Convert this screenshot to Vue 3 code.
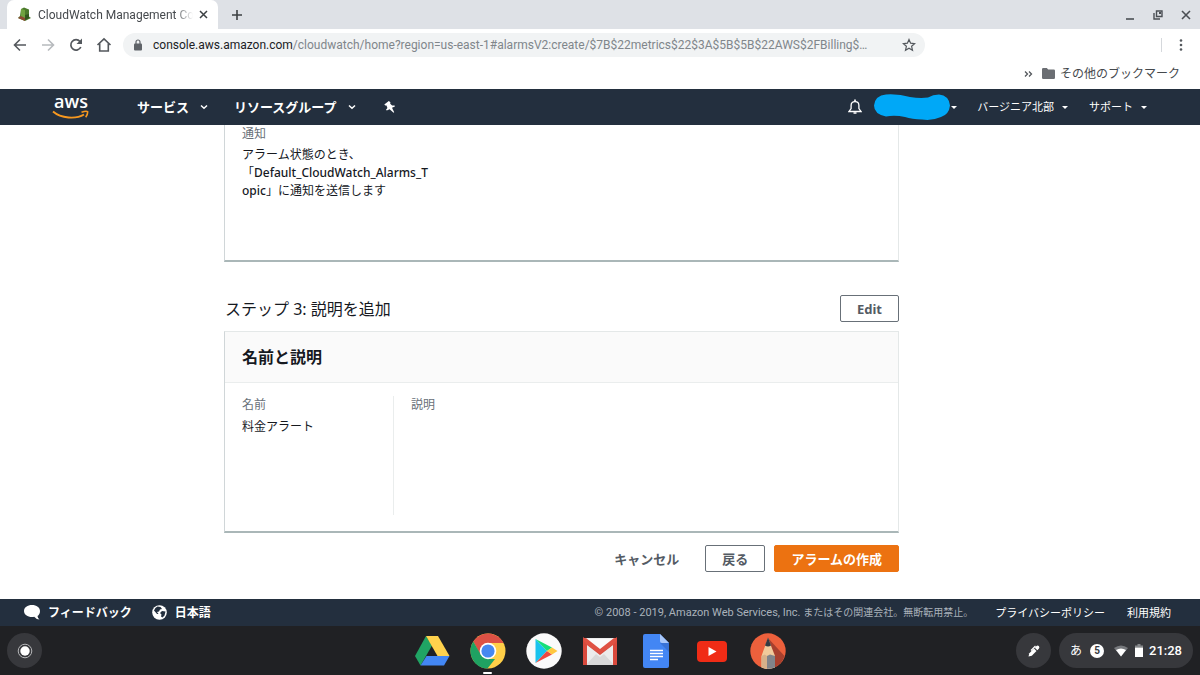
<script setup>
const path = '/cloudwatch/home?region=us-east-1#alarmsV2:create/$7B$22metrics$22$3A$5B$5B$22AWS$2FBilling$…'
</script>

<template>
  <div class="screen">
    <header class="tabs">
      <div class="tab">
        <svg class="favicon" width="15" height="15" viewBox="0 0 15 15" aria-hidden="true">
          <path d="M4 2l3-1.500 5 2v7l2 1.500-6 3-7-3 2-2z" fill="#4b7a2b" />
          <path d="M4 2l4 1v10l-4-2z" fill="#6fa23f" /><path d="M1 11l3-2 4 2v3z" fill="#8b4a32" />
          <path d="M8 8l4-1v4l-4 2z" fill="#31561e" />
        </svg>
        <span class="tab-title">CloudWatch Management Console</span>
        <button class="plain close" aria-label="Close tab">
          <svg width="9" height="9" viewBox="0 0 9 9"><path d="M1 1l7 7M8 1l-7 7" stroke="#3c4043" stroke-width="1.500" /></svg>
        </button>
      </div>
      <button class="plain add" aria-label="New tab">
        <svg width="12" height="12" viewBox="0 0 12 12"><path d="M6 1v10M1 6h10" stroke="#3c4043" stroke-width="1.600" /></svg>
      </button>
      <div class="window-controls">
        <button class="plain" aria-label="Minimize"><svg width="12" height="12" viewBox="0 0 12 12"><path d="M2 10h8" stroke="#4b4f54" stroke-width="1.600" /></svg></button>
        <button class="plain" aria-label="Restore"><svg width="12" height="12" viewBox="0 0 12 12"><path d="M4.500 2h5.500v5.500h-5.500zM2 4v6h6" fill="none" stroke="#4b4f54" stroke-width="1.400" /><path d="M7 3h2v2h-2z" fill="#4b4f54" /></svg></button>
        <button class="plain" aria-label="Close window"><svg width="12" height="12" viewBox="0 0 12 12"><path d="M2 2l8 8M10 2l-8 8" stroke="#4b4f54" stroke-width="1.600" /></svg></button>
      </div>
    </header>

    <div class="toolbar">
      <button class="plain" aria-label="Back"><svg width="16" height="16" viewBox="0 0 16 16"><path d="M14 8H2.500M8 2.500L2.500 8 8 13.500" fill="none" stroke="#54585d" stroke-width="1.600" /></svg></button>
      <button class="plain" aria-label="Forward"><svg width="16" height="16" viewBox="0 0 16 16"><path d="M2 8h11.500M8 2.500L13.500 8 8 13.500" fill="none" stroke="#b7babd" stroke-width="1.600" /></svg></button>
      <button class="plain" aria-label="Reload"><svg width="16" height="16" viewBox="0 0 16 16"><path d="M12.800 10A5.200 5.200 0 1 1 12 4.500L13.500 6" fill="none" stroke="#54585d" stroke-width="1.700" /><path d="M14 1.500v5.500H8.500z" fill="#54585d" /></svg></button>
      <button class="plain" aria-label="Home"><svg width="16" height="16" viewBox="0 0 16 16"><path d="M1.500 8L8 1.800 14.500 8M3.700 6.500V14h8.600V6.500" fill="none" stroke="#54585d" stroke-width="1.600" /></svg></button>
      <div class="address">
        <svg width="10" height="12" viewBox="0 0 10 12" aria-hidden="true"><rect x="1" y="4.500" width="8" height="7" rx="1" fill="#5f6368" /><path d="M3 5V3a2 2 0 0 1 4 0v2" fill="none" stroke="#5f6368" stroke-width="1.200" /></svg>
        <span class="url"><span class="host">console.aws.amazon.com</span>{{ path }}</span>
        <button class="plain" aria-label="Bookmark this page"><svg width="14" height="14" viewBox="0 0 14 14"><path d="M7 1.500l1.600 3.700 4 .4-3 2.700.9 4L7 10.200l-3.500 2.100.9-4-3-2.700 4-.4z" fill="none" stroke="#54585d" stroke-width="1.200" /></svg></button>
      </div>
      <span class="divider"></span>
      <button class="plain" aria-label="Browser menu"><svg width="4" height="14" viewBox="0 0 4 14" fill="#54585d"><circle cx="2" cy="2.500" r="1.300" /><circle cx="2" cy="7" r="1.300" /><circle cx="2" cy="11.500" r="1.300" /></svg></button>
    </div>

    <div class="bookmarks">
      <button class="plain more" aria-label="More bookmarks"><svg width="9" height="8" viewBox="0 0 9 8"><path d="M1 1.500l2.500 2.500L1 6.500M5 1.500l2.500 2.500L5 6.500" fill="none" stroke="#54585d" stroke-width="1.300" /></svg></button>
      <button class="plain folder">
        <svg width="13" height="11" viewBox="0 0 13 11" aria-hidden="true"><path d="M1.200 0h3.600L6.200 1.500h5.600q1.200 0 1.200 1.200v7q0 1.300-1.200 1.300H1.200Q0 11 0 9.700V1.300Q0 0 1.200 0z" fill="#6b6e73" /></svg>
        その他のブックマーク
      </button>
    </div>

    <nav class="nav">
      <a class="aws" href="#" aria-label="aws">
        <span>aws</span>
        <svg width="38" height="10" viewBox="0 0 38 10" aria-hidden="true"><path d="M1 1.500C9 8.500 24 9.500 32 4.500" fill="none" stroke="#f7981f" stroke-width="1.900" /><path d="M29.500 2.200q5-1.600 6.200-.4 0 3-2 5.400" fill="none" stroke="#f7981f" stroke-width="1.600" /></svg>
      </a>
      <button class="plain menu services">サービス<svg width="8" height="6" viewBox="0 0 8 6"><path d="M1 1.500l3 2.800 3-2.800" fill="none" stroke="#fff" stroke-width="1.500" /></svg></button>
      <button class="plain menu groups">リソースグループ<svg width="8" height="6" viewBox="0 0 8 6"><path d="M1 1.500l3 2.800 3-2.800" fill="none" stroke="#fff" stroke-width="1.500" /></svg></button>
      <button class="plain pin" aria-label="Pin"><svg width="12" height="14" viewBox="0 0 12 14"><path d="M4.800 1L.3 4.600l1 1 1.200 0 .9 2.400L2 9.800l.8.8 2.800-1.400 4 3.600.6-.5-2.200-4.500 2.900-1.300-.3-1-2.500.1-1.900-1.800.2-1.600z" fill="#fff" /></svg></button>
      <div class="account">
        <button class="plain" aria-label="Notifications"><svg width="14" height="16" viewBox="0 0 14 16"><path d="M1 12.500h12L10.900 9.500V6.500Q10.900 2.600 7 2.600T3.100 6.500v3z" fill="none" stroke="#fff" stroke-width="1.300" /><path d="M7 .5v2M5.500 14h3" stroke="#fff" stroke-width="1.700" /></svg></button>
        <button class="plain small user" aria-label="Account"><svg width="76" height="28" viewBox="0 0 76 28"><path d="M12 1.500Q25 .8 36 4q10 1.500 18 .5 5-3 11-3 10 1 11 11-1 9-9 11.500-9 4-19 2.500-10-.5-17-2.500-10-2-19-.5Q0 21 0 12.500 1 2.500 12 1.500z" fill="#00a8f7" /></svg><span class="caret"></span></button>
        <button class="plain small region">バージニア北部<span class="caret"></span></button>
        <button class="plain small support">サポート<span class="caret"></span></button>
      </div>
    </nav>

    <main class="content">
      <section class="card notice">
        <h3 class="label">通知</h3>
        <p class="message">アラーム状態のとき、<br />「<b>Default_CloudWatch_Alarms_T</b><br /><b>opic</b>」に通知を送信します</p>
      </section>
      <div class="step">
        <h1>ステップ 3: 説明を追加</h1>
        <button class="button">Edit</button>
      </div>
      <section class="card">
        <header class="card-head"><h2>名前と説明</h2></header>
        <dl class="fields">
          <div class="field"><dt class="label">名前</dt><dd>料金アラート</dd></div>
          <div class="field"><dt class="label">説明</dt><dd></dd></div>
        </dl>
      </section>
      <div class="actions">
        <button class="button link">キャンセル</button>
        <button class="button">戻る</button>
        <button class="button primary">アラームの作成</button>
      </div>
    </main>

    <footer class="footer">
      <a href="#" class="strong">
        <svg width="16" height="15" viewBox="0 0 16 15" aria-hidden="true"><path d="M8 0c4.500 0 8 2.500 8 6 0 2.500-1 4-2.500 5q.2 2 2 3.500-3.200 0-5.300-2.700Q9 12 8 12c-4.500 0-8-2.500-8-6s3.500-6 8-6z" fill="#fff" /></svg>
        フィードバック
      </a>
      <a href="#" class="strong lang">
        <svg width="15" height="15" viewBox="0 0 15 15" aria-hidden="true"><circle cx="7.500" cy="7.500" r="7.300" fill="#fff" /><path d="M5.500 1.500l3 .5 1.500 2-2 .5-1 2-2 .5L6.500 9 5 9 2 5.500Q3 2.500 5.500 1.500zM10 6l3.500.5-1 4-2 2-1.500-1 .5-2-1.500-1.500z" fill="#232f3e" /></svg>
        日本語
      </a>
      <small>© 2008 - 2019, Amazon Web Services, Inc. <span>またはその関連会社。無断転用禁止。</span></small>
      <a href="#">プライバシーポリシー</a>
      <a href="#" class="terms">利用規約</a>
    </footer>

    <div class="shelf">
      <button class="plain round" aria-label="Launcher"><svg width="16" height="16" viewBox="0 0 16 16"><circle cx="8" cy="8" r="6.800" fill="none" stroke="#b5b6b8" /><circle cx="8" cy="8" r="4.700" fill="#fff" /></svg></button>
      <div class="apps">
        <button class="plain" aria-label="Drive"><svg width="36" height="36" viewBox="0 0 36 36"><path d="M12 3L1 23l5.500 9.500L18 12.500z" fill="#20a464" /><path d="M12 3h12l11.500 20H23.500z" fill="#ffd24d" /><path d="M6.500 32.500L12.500 23h23L30 32.500z" fill="#4387f4" /></svg></button>
        <button class="plain active" aria-label="Chrome"><svg width="36" height="36" viewBox="0 0 36 36"><circle cx="18" cy="18" r="17.500" fill="#ffcf48" /><path d="M3.300 8.500A17.500 17.500 0 0 1 33.500 10H18L10.500 22z" fill="#dd5145" /><path d="M3.300 8.500L11 22 18 26h7l-7.500 9.500A17.500 17.500 0 0 1 3.300 8.500z" fill="#1fa262" /><circle cx="18" cy="18" r="8.300" fill="#fff" /><circle cx="18" cy="18" r="6.600" fill="#4688f1" /></svg></button>
        <button class="plain" aria-label="Play Store"><svg width="36" height="36" viewBox="0 0 36 36"><circle cx="18" cy="18" r="17.700" fill="#fafafa" /><path d="M9.500 6L21 18 9.500 30z" fill="#19c3ee" /><path d="M9.500 6L26 14.500 21 18z" fill="#15df78" /><path d="M9.500 30L21 18l5 3.500z" fill="#ef4840" /><path d="M26 14.500l5.500 3.500-5.500 3.500L21 18z" fill="#ffc73e" /></svg></button>
        <button class="plain" aria-label="Gmail"><svg width="36" height="36" viewBox="0 0 36 36"><rect x="1" y="5" width="34" height="27" rx="2" fill="#ececec" /><path d="M4 32l10-11 4 3 4-3 10 11z" fill="#d9d9d9" /><path d="M4 6h28L18 17z" fill="#fafafa" /><path d="M3 32V8l15 11.500L33 8v24" fill="none" stroke="#d94a3d" stroke-width="4" /><path d="M1 7q0-2 3-2l14 11L32 5q3 0 3 2l-3 4-14 10L4 11z" fill="#df5143" /></svg></button>
        <button class="plain" aria-label="Docs"><svg width="36" height="36" viewBox="0 0 36 36"><path d="M7 1h15l9 9v23q0 2-2 2H7q-2 0-2-2V3q0-2 2-2z" fill="#4386f4" /><path d="M22 1v7q0 2 2 2h7z" fill="#a8c7fa" /><path d="M22 10h9v9z" fill="#3973d6" /><path d="M12 17.500h13M12 20.500h13M12 23.500h13M12 26.500h8" stroke="#fff" stroke-width="1.400" /></svg></button>
        <button class="plain" aria-label="YouTube"><svg width="36" height="36" viewBox="0 0 36 36"><rect x="3" y="8" width="30" height="21" rx="4" fill="#f02c16" /><path d="M14.500 14l8 4.500-8 4.500z" fill="#fff" /></svg></button>
        <button class="plain" aria-label="Sketchpad"><svg width="36" height="36" viewBox="0 0 36 36"><circle cx="18" cy="18" r="17.700" fill="#ed603c" /><path d="M18 5L34.500 23A17.700 17.700 0 0 1 24 34.500z" fill="#a8402e" /><path d="M18 5l-6.500 18v11.500a17.700 17.700 0 0 0 13.500 0V23z" fill="#f1ca9b" /><path d="M11.500 23l3.300-1.500 2.200 1.500v12.800q-3-.2-5.500-1.500z" fill="#d7b18a" /><path d="M17 23l3-1.500 5 1.500v11.300q-4 1.700-8 1.500z" fill="#81848a" /><path d="M18 4.500l-3 8q3 2 6 0z" fill="#343a42" /></svg></button>
      </div>
      <div class="status">
        <button class="plain round" aria-label="Stylus tools"><svg width="14" height="14" viewBox="0 0 14 14"><path d="M1.500 12.500l.8-3.300L7 4.500 9.500 7 4.800 11.700z" fill="#fff" /><path d="M7.800 3.700l1.700-1.700q1.200-1 2.300.1t.2 2.300L10.300 6.200z" fill="#fff" /><path d="M4 6.500L8.500 2" fill="none" stroke="#fff" stroke-width="1.300" /></svg></button>
        <button class="plain tray">
          <span class="ime">あ</span><span class="count">5</span>
          <svg class="wifi" width="14" height="12" viewBox="0 0 14 12" aria-label="Wi-Fi"><path d="M0 3q7-5 14 0L7 11.500z" fill="#77797d" /><path d="M2 5q5-3 10 0L7 11.500z" fill="#fff" /></svg>
          <svg class="battery" width="8" height="13" viewBox="0 0 8 13" aria-label="Battery"><path d="M2.500 0h3v1.500H8v2H0v-2h2.500z" fill="#85878a" /><path d="M0 3.500h8V13H0z" fill="#fff" /></svg>
          <time>21:28</time>
        </button>
      </div>
    </div>
  </div>
</template>

<style>
body { background: #fff; }
</style>

<style scoped>
* { box-sizing: border-box; }
.screen { display: flex; flex-direction: column; height: 100vh; overflow: hidden; color: #16191f; font: 12px/18px "Noto Sans", "Noto Sans CJK JP", sans-serif; }
.plain { display: flex; align-items: center; flex: none; padding: 0; border: 0; background: none; color: inherit; font: inherit; white-space: nowrap; }
svg { display: block; flex: none; }
a { color: inherit; text-decoration: none; white-space: nowrap; }
h1, h2, h3, p, dl, dd { margin: 0; }

.tabs { display: flex; align-items: center; flex: none; height: 29px; padding: 0 8px 0 7px; background: #dee1e6; font-family: Roboto, sans-serif; color: #45494d; }
.tab { display: flex; align-items: center; width: 211px; height: 29px; padding: 0 10px; background: #fff; border-radius: 7px 7px 0 0; }
.tab-title { flex: 1; margin: 0 6px; overflow: hidden; white-space: nowrap; mask-image: linear-gradient(to right, #000 88%, transparent); }
.add { margin-left: 13px; }
.window-controls { display: flex; gap: 16px; margin-left: auto; }

.toolbar { display: flex; align-items: center; flex: none; height: 32px; padding: 0 17px 0 12px; font-family: Roboto, sans-serif; }
.toolbar > .plain + .plain { margin-left: 12px; }
.address { display: flex; align-items: center; flex: 0 1 802px; min-width: 0; height: 24px; margin-left: 11px; padding: 0 9px 0 10px; border-radius: 12px; background: #f1f3f4; }
.url { flex: 1; min-width: 0; margin: 0 12px 0 10px; overflow: hidden; color: #80868b; font-size: 12px; white-space: nowrap; text-overflow: ellipsis; }
.host { color: #202124; }
.divider { width: 1px; height: 14px; margin: 0 17px 0 auto; background: #d5d8dc; }

.bookmarks { display: flex; align-items: center; justify-content: flex-end; flex: none; height: 28px; padding: 0 20px 3px 0; color: #45494d; }
.more { margin-right: 9px; }
.folder { gap: 5px; }

.nav { display: flex; align-items: center; flex: none; height: 36px; padding: 0 53px 0 52px; background: #232f3e; color: #fff; }
.aws { display: flex; flex-direction: column; align-items: center; gap: 2px; width: 38px; font: 600 18px/14px "Open Sans", sans-serif; }
.menu { font-size: 13px; font-weight: 700; gap: 11px; }
.services { margin-left: 47px; }
.groups { margin-left: 26px; }
.pin { margin-left: 28px; }
.account { display: flex; align-items: center; margin-left: auto; }
.small { gap: 8px; font-size: 11px; }
.user { margin-left: 12px; gap: 1px; }
.region { margin-left: 20px; }
.support { margin-left: 21px; }
.caret { border: solid transparent; border-width: 3px 3px 0; border-top-color: #fff; }

.content { flex: 1; min-height: 0; padding: 0 301px 0 224px; overflow: hidden; background: #fff; }
.card { border: 1px solid #e4e8e8; border-left-color: #d0d6d8; border-bottom: 2px solid #aab7b8; }
.notice { height: 137px; padding: 0 17px; border-top: 0; }
.label { color: #687078; font-size: 12px; font-weight: 400; }
.message { margin-top: 3px; }
.message b { font-weight: 500; }
.step { display: flex; align-items: center; justify-content: space-between; margin: 33px 0 9px; padding-left: 1px; }
h1 { font-size: 16px; line-height: 24px; font-weight: 400; }
h2 { font-size: 16px; line-height: 24px; font-weight: 700; }
.card-head { padding: 13px 17px; border-bottom: 1px solid #eaeded; background: #fafafa; }
.fields { display: flex; height: 148px; padding: 13px 0 16px; }
.field { width: 168px; padding-left: 17px; }
.field + .field { flex: 1; border-left: 1px solid #eaeded; }
dd { margin-top: 4px; }
.button { height: 27px; padding: 0 16px; border: 1px solid #687078; border-radius: 2px; background: #fff; color: #545b64; font: 700 13px/18px "Noto Sans", "Noto Sans CJK JP", sans-serif; white-space: nowrap; }
.actions { display: flex; justify-content: flex-end; gap: 9px; margin-top: 12px; }
.link { border-color: transparent; }
.primary { border-color: #ec7211; background: #ec7211; color: #fff; }

.footer { display: flex; align-items: center; flex: none; height: 27px; padding: 0 29px 0 24px; background: #232f3e; color: #fff; font-size: 11px; }
.footer a { display: flex; align-items: center; }
.strong { gap: 8px; font-size: 12px; font-weight: 700; }
.lang { margin-left: 20px; }
small { margin: 0 22px 0 auto; color: #aab2bb; font: 11px/18px Roboto, "Noto Sans CJK JP", sans-serif; white-space: nowrap; }
small span { font-size: 10px; }
.terms { margin-left: 22px; }

.shelf { display: grid; grid-template-columns: 1fr auto 1fr; align-items: center; flex: none; height: 49px; padding: 0 7px; background: #202124; color: #fff; }
.round { justify-content: center; width: 35px; height: 35px; border-radius: 50%; background: #37383c; }
.apps { display: flex; gap: 20px; }
.active { position: relative; }
.active::after { position: absolute; bottom: -5px; left: 13px; width: 9px; height: 2px; border-radius: 1px; background: #fff; content: ""; }
.status { display: flex; justify-content: flex-end; gap: 8px; }
.tray { height: 35px; padding: 0 11px; border-radius: 18px; background: #37383c; font-family: Roboto, "Noto Sans CJK JP", sans-serif; }
.count { width: 14px; height: 14px; margin: 0 10px 0 8px; border-radius: 50%; background: #fff; color: #37383c; font-size: 10px; line-height: 14px; font-weight: 700; }
.wifi { margin-right: 7px; }
.battery { margin-right: 6px; }
time { font-size: 13px; font-weight: 500; }
</style>
